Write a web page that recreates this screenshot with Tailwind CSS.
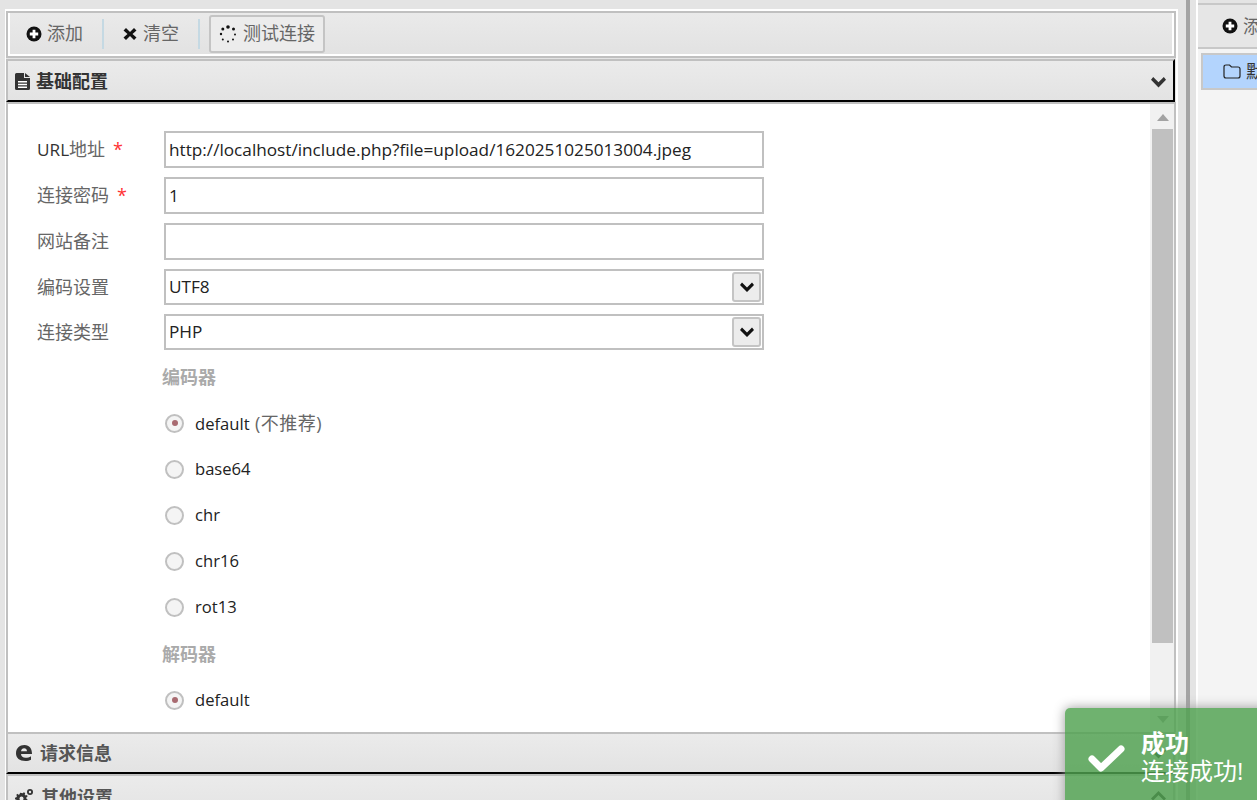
<!doctype html>
<html>
<head>
<meta charset="utf-8">
<script src="https://cdn.jsdelivr.net/npm/@tailwindcss/browser@4"></script>
</head>
<body class="m-0 overflow-hidden">
<div class="relative flex h-[800px] w-[1257px] overflow-hidden bg-[#e4e4e4] font-['Open_Sans','Noto_Sans_CJK_SC',sans-serif] text-[18px] text-[#333]">
  <!-- left pane -->
  <div class="ml-[5px] mt-[9px] flex h-[900px] w-[1173px] shrink-0 flex-col border-l-[1px] border-r-[2px] border-t-[2px] border-white">
    <div class="border-x-[2px] border-y-[2px] border-[#c0c0c0]">
      <div class="flex h-[43px] items-center border-x-[2px] border-b-[2px] border-white bg-gradient-to-b from-[#eaeaea] to-[#e2e2e2] pl-[16px] text-[#666]">
        <div class="flex items-center gap-[5px]">
          <svg class="h-[16px] w-[16px]" viewBox="0 0 16 16"><circle cx="8" cy="8" r="7.5" fill="#111"/><path d="M3.800 6.600h2.800V3.800h2.800v2.800h2.800v2.800H9.400v2.800H6.600V9.400H3.800z" fill="#fff"/></svg>
          <span>添加</span>
        </div>
        <div class="ml-[19px] h-[30px] w-[2px] bg-[#c5d9e3]"></div>
        <div class="ml-[19px] flex items-center gap-[6px]">
          <svg class="h-[14px] w-[14px]" viewBox="0 0 14 14"><path d="M3 1l4 4 4-4 2.500 2.500-4 3.500 4 3.500L11 13 7 9l-4 4-2.500-2.500 4-3.500-4-3.500z" fill="#111"/></svg>
          <span>清空</span>
        </div>
        <div class="ml-[19px] h-[30px] w-[2px] bg-[#c5d9e3]"></div>
        <div class="ml-[9px] flex h-[38px] w-[116px] items-center gap-[6px] rounded-[3px] border-[2px] border-[#c4c4c4] bg-[#ececec] pl-[8px]">
          <svg class="h-[18px] w-[18px]" viewBox="0 0 18 18" fill="#111"><circle cx="9" cy="2" r="1.800"/><circle cx="14.500" cy="4" r="1.500"/><circle cx="16" cy="9.500" r="1"/><circle cx="14" cy="14.500" r="1"/><circle cx="9" cy="16.500" r="1"/><circle cx="3.800" cy="14.500" r="1"/><circle cx="2" cy="9" r="1.200"/><circle cx="3.800" cy="4" r="1.500"/></svg>
          <span class="whitespace-nowrap">测试连接</span>
        </div>
      </div>
    </div>
    <div class="h-[1px] shrink-0"></div>
    <div class="mr-[1px] flex h-[43px] shrink-0 items-center justify-between border-x-[2px] border-t-[2px] border-b-[2px] border-[#c0c0c0] border-b-black border-r-black bg-gradient-to-b from-[#ebebeb] to-[#e3e3e3] pl-[7px] pr-[7px] pt-[2px] font-bold">
      <div class="flex items-center gap-[6px]">
        <svg class="h-[17px] w-[15px]" viewBox="0 0 15 17"><path d="M0 1.500Q0 0 1.500 0H9v5h6v10.500q0 1.500-1.500 1.500h-12Q0 17 0 15.500z" fill="#333"/><path d="M10 0l5 4h-5z" fill="#333"/><path d="M3 8h9v1.500H3zM3 10.800h9v1.500H3zM3 13.600h9v1.500H3z" fill="#fff"/></svg>
        <span>基础配置</span>
      </div>
      <svg class="h-[12px] w-[15px]" viewBox="0 0 15 12"><path d="M2.200 1l5.300 5.300L12.800 1 15 3.800l-7.500 7.700L0 3.800z" fill="#333"/></svg>
    </div>
    <div class="h-[2px] shrink-0 bg-[#c0c0c0]"></div>
    <!-- body -->
    <div class="flex h-[628px] shrink-0 overflow-hidden border-x-[2px] border-[#c0c0c0] bg-white">
      <div class="min-w-0 flex-1 pl-[29px] pt-[27px]">
        <div class="mb-[9px] flex h-[37px] items-center">
          <div class="flex w-[127px] items-center text-[#333]"><span class="text-[17.200px]">URL</span><span class="text-[#666]">地址</span><span class="ml-[8px] text-[#f33]">*</span></div>
          <div class="flex h-[37px] w-[600px] items-center border-[2px] border-[#c0c0c0] pl-[3px] text-[17.200px] text-[#222]">http://localhost/include.php?file=upload/1620251025013004.jpeg</div>
        </div>
        <div class="mb-[9px] flex h-[37px] items-center">
          <div class="flex w-[127px] items-center text-[#666]">连接密码<span class="ml-[8px] text-[#f33]">*</span></div>
          <div class="flex h-[37px] w-[600px] items-center border-[2px] border-[#c0c0c0] pl-[3px] text-[17.200px] text-[#222]">1</div>
        </div>
        <div class="mb-[9px] flex h-[37px] items-center">
          <div class="w-[127px] text-[#666]">网站备注</div>
          <div class="h-[37px] w-[600px] border-[2px] border-[#c0c0c0]"></div>
        </div>
        <div class="mb-[9px] flex h-[36px] items-center">
          <div class="w-[127px] text-[#666]">编码设置</div>
          <div class="flex h-[36px] w-[600px] items-center justify-between border-[2px] border-[#c0c0c0] pl-[3px] pr-[1px] text-[17.200px] text-[#222]">UTF8
            <div class="flex h-[30px] w-[29px] items-center justify-center rounded-[3px] border-[2px] border-[#c4c4c4] bg-[#ececec]"><svg class="h-[10px] w-[14px]" viewBox="0 0 14 10"><path d="M2 0.500l5 5 5-5 2 2.500-7 7-7-7z" fill="#111"/></svg></div>
          </div>
        </div>
        <div class="flex h-[36px] items-center">
          <div class="w-[127px] text-[#666]">连接类型</div>
          <div class="flex h-[36px] w-[600px] items-center justify-between border-[2px] border-[#c0c0c0] pl-[3px] pr-[1px] text-[17.200px] text-[#222]">PHP
            <div class="flex h-[30px] w-[29px] items-center justify-center rounded-[3px] border-[2px] border-[#c4c4c4] bg-[#ececec]"><svg class="h-[10px] w-[14px]" viewBox="0 0 14 10"><path d="M2 0.500l5 5 5-5 2 2.500-7 7-7-7z" fill="#111"/></svg></div>
          </div>
        </div>
        <div class="ml-[125px] mt-[15px] h-[24px] font-bold leading-[24px] text-[#aaa]">编码器</div>
        <div class="ml-[128px] mt-[11px] flex h-[46px] items-center gap-[11px] text-[16.600px] text-[#222]">
          <span class="flex h-[19px] w-[19px] items-center justify-center rounded-full border-[2px] border-[#c0c0c0] bg-[#f4f4f4]"><span class="h-[6px] w-[6px] rounded-full bg-[#a86a70]"></span></span>
          <span>default <span class="ml-[1px] text-[18px] tracking-[0.5px] text-[#666]">(不推荐)</span></span>
        </div>
        <div class="ml-[128px] flex h-[46px] items-center gap-[11px] text-[16.600px] text-[#222]"><span class="h-[19px] w-[19px] rounded-full border-[2px] border-[#c0c0c0] bg-[#f4f4f4]"></span><span>base64</span></div>
        <div class="ml-[128px] flex h-[46px] items-center gap-[11px] text-[16.600px] text-[#222]"><span class="h-[19px] w-[19px] rounded-full border-[2px] border-[#c0c0c0] bg-[#f4f4f4]"></span><span>chr</span></div>
        <div class="ml-[128px] flex h-[46px] items-center gap-[11px] text-[16.600px] text-[#222]"><span class="h-[19px] w-[19px] rounded-full border-[2px] border-[#c0c0c0] bg-[#f4f4f4]"></span><span>chr16</span></div>
        <div class="ml-[128px] flex h-[46px] items-center gap-[11px] text-[16.600px] text-[#222]"><span class="h-[19px] w-[19px] rounded-full border-[2px] border-[#c0c0c0] bg-[#f4f4f4]"></span><span>rot13</span></div>
        <div class="ml-[125px] mt-[12px] h-[24px] font-bold leading-[24px] text-[#aaa]">解码器</div>
        <div class="ml-[128px] mt-[11px] flex h-[46px] items-center gap-[11px] text-[16.600px] text-[#222]">
          <span class="flex h-[19px] w-[19px] items-center justify-center rounded-full border-[2px] border-[#c0c0c0] bg-[#f4f4f4]"><span class="h-[6px] w-[6px] rounded-full bg-[#a86a70]"></span></span>
          <span>default</span>
        </div>
      </div>
      <div class="flex w-[24px] shrink-0 flex-col items-center bg-[#f1f1f1]">
        <svg class="ml-[1px] mt-[10px] h-[7px] w-[12px]" viewBox="0 0 12 7"><path d="M6 0l6 7H0z" fill="#a3a3a3"/></svg>
        <div class="ml-[1px] mt-[8px] h-[514px] w-[21px] bg-[#c0c0c0]"></div>
        <svg class="ml-[1px] mt-[73px] h-[7px] w-[12px]" viewBox="0 0 12 7"><path d="M0 0h12L6 7z" fill="#a3a3a3"/></svg>
      </div>
    </div>
    <div class="mr-[1px] flex h-[42px] shrink-0 items-center justify-between border-x-[2px] border-t-[2px] border-b-[2px] border-[#c0c0c0] border-b-black bg-gradient-to-b from-[#ebebeb] to-[#e3e3e3] pl-[7px] pr-[7px] font-bold text-[#555]">
      <div class="flex items-center gap-[7px]">
        <svg class="h-[18px] w-[18px]" viewBox="0 0 18 18"><path d="M1 9.500C1 4 4.500 1 9.500 1 14.500 1 17 4.500 17 10H6c.2 2.500 2 3.800 4.500 3.800 2 0 4-.6 5.500-1.600v3.600c-1.500.8-3.500 1.200-5.500 1.200C4.500 17 1 14 1 9.500zM6 7.200h6c-.1-1.900-1.200-2.900-2.900-2.900C7.500 4.300 6.300 5.300 6 7.200z" fill="#333"/></svg>
        <span>请求信息</span>
      </div>
      <svg class="h-[12px] w-[15px]" viewBox="0 0 15 12"><path d="M2.200 1l5.300 5.300L12.800 1 15 3.800l-7.500 7.700L0 3.800z" fill="#333"/></svg>
    </div>
    <div class="h-[2px] shrink-0 bg-[#c0c0c0]"></div>
    <div class="mr-[1px] flex h-[42px] shrink-0 items-center justify-between border-x-[2px] border-[#c0c0c0] bg-gradient-to-b from-[#ebebeb] to-[#e3e3e3] pl-[7px] pr-[7px] font-bold text-[#555]">
      <div class="flex items-center gap-[7px]">
        <svg class="h-[18px] w-[19px]" viewBox="0 0 19 18"><path d="M6.500 5l1.400.3.800-1.100 1.500.9-.5 1.300 1 1 1.300-.4.600 1.600-1.200.7v1.400l1.200.7-.6 1.600-1.300-.4-1 1 .5 1.300-1.500.9-.8-1.100-1.400.3-.5 1.300H5l-.3-1.400-1.300-.5-1 .9L1.200 14l.8-1.100-.6-1.200L0 11.300V9.700l1.400-.4.6-1.200L1.200 7l1.200-1.200 1 .9 1.300-.5L5 4.800z" fill="#333"/><circle cx="6.500" cy="10.500" r="2" fill="#e6e6e6"/><circle cx="15" cy="4" r="3" fill="#333"/><circle cx="15" cy="4" r="1.200" fill="#e6e6e6"/></svg>
        <span>其他设置</span>
      </div>
      <svg class="h-[12px] w-[15px]" viewBox="0 0 15 12"><path d="M7.500 0L15 7.500l-2 2L7.500 4 2 9.500l-2-2z" fill="#333"/></svg>
    </div>
  </div>
  <!-- splitter -->
  <div class="ml-[8px] h-full w-[4px] shrink-0 bg-[#a4a4a4]"></div>
  <div class="h-full w-[6px] shrink-0 bg-[#e4e4e4]"></div>
  <!-- right pane -->
  <div class="flex h-full min-w-0 flex-1 flex-col border-l-[2px] border-white pt-[3px]">
    <div class="h-[2px] shrink-0 bg-[#c8c8c8]"></div>
    <div class="flex h-[44px] shrink-0 items-center gap-[5px] border-b-[2px] border-[#c8c8c8] bg-[#e6e6e6] pl-[24px] text-[#666]">
      <svg class="h-[16px] w-[16px] shrink-0" viewBox="0 0 16 16"><circle cx="8" cy="8" r="7.500" fill="#111"/><path d="M3.800 6.600h2.800V3.800h2.800v2.800h2.800v2.800H9.400v2.800H6.600V9.400H3.800z" fill="#fff"/></svg>
      <span class="whitespace-nowrap">添加</span>
    </div>
    <div class="flex-1 bg-[#f4f4f4] pl-[3px] pt-[4px]">
      <div class="flex h-[37px] items-center gap-[5px] overflow-hidden border-[2px] border-[#c8c8c8] border-r-0 bg-[#b3d4fd] pl-[20px] text-[#333]">
        <svg class="h-[15px] w-[18px] shrink-0" viewBox="0 0 18 15" fill="none" stroke="#222" stroke-width="1.200"><path d="M1 3q0-2 2-2h3.500l2 2H15q2 0 2 2v7q0 2-2 2H3q-2 0-2-2z"/></svg>
        <span class="whitespace-nowrap">默认</span>
      </div>
    </div>
  </div>
  <!-- toast -->
  <div class="absolute left-[1065px] top-[708px] flex h-[120px] w-[230px] rounded-tl-[5px] bg-[#4fa14f]/82 pl-[23px] pt-[21px] text-white shadow-[0_0_12px_#999]">
    <svg class="mt-[15px] h-[28px] w-[37px] shrink-0" viewBox="0 0 37 28"><path d="M4 15l9 9L33 5" fill="none" stroke="#fff" stroke-width="7" stroke-linecap="round" stroke-linejoin="round"/></svg>
    <div class="ml-[16px]">
      <div class="text-[24px] font-bold leading-[28px]">成功</div>
      <div class="text-[24px] leading-[28px] whitespace-nowrap">连接成功!</div>
    </div>
  </div>
</div>
</body>
</html>
